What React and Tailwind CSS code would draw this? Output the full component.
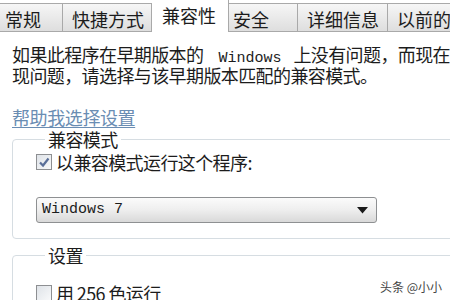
import React from 'react'

const cjk = { fontFamily: '"Noto Sans CJK SC", "Noto Sans", sans-serif' }
const mono = { fontFamily: '"Liberation Mono", monospace' }

const tabs = [
  { label: '常规', w: 'w-[63px]', pl: 'pl-[5px]' },
  { label: '快捷方式', w: 'w-[89px]', pl: 'pl-[9px]' },
  { label: '兼容性', w: 'w-[77px]', pl: 'pl-[10px]', active: true },
  { label: '安全', w: 'w-[69px]', pl: 'pl-[4px]' },
  { label: '详细信息', w: 'w-[90px]', pl: 'pl-[9px]' },
  { label: '以前的版本', w: 'w-[90px]', pl: 'pl-[9px]' },
]

function Check({ checked }) {
  return (
    <span className="w-[16px] h-[16px] border border-[#8d8f92] bg-gradient-to-br from-[#dfe3e8] to-[#f8f9fa] flex items-center justify-center shrink-0">
      {checked && (
        <svg width="12" height="12" viewBox="0 0 12 12">
          <path d="M2 6.5 L5 9.5 L10.5 2.5" fill="none" stroke="#5a6f99" strokeWidth="2.2" />
        </svg>
      )}
    </span>
  )
}

export default function App() {
  return (
    <div className="w-[450px] h-[300px] overflow-hidden bg-white relative text-[#1c1c1c]" style={cjk}>
      {/* tab strip */}
      <div className="flex items-end h-[32px] border-b border-[#a9a9a9]">
        {tabs.map(t => (
          <div
            key={t.label}
            className={`${t.w} ${t.pl} shrink-0 whitespace-nowrap overflow-hidden text-[18px] border border-l-0 border-[#a9a9a9] ${t.active ? 'h-[33px] -mb-px bg-white border-b-0 border-l leading-[30px]' : 'h-[28px] border-b-0 bg-gradient-to-b from-[#f6f6f6] to-[#dedede] leading-[30px]'}`}
          >
            {t.label}
          </div>
        ))}
      </div>

      <div className="pl-[12px] pt-[14px] text-[18px] tracking-[-0.6px] leading-[17px] whitespace-nowrap">
        <div className="flex items-baseline">
          <span>如果此程序在早期版本的</span>
          <span className="text-[15px] tracking-normal ml-[15px] mr-[12px]" style={mono}>Windows</span>
          <span>上没有问题，而现在出</span>
        </div>
        <div>现问题，请选择与该早期版本匹配的兼容模式。</div>
      </div>

      <div className="pl-[12px] mt-[23px] text-[18px] tracking-[-0.4px] leading-[20px]">
        <span className="text-[#6a8db3] underline underline-offset-2">帮助我选择设置</span>
      </div>

      <fieldset className="ml-[12px] w-[460px] border border-[#d6dde2] rounded-[4px] pl-[23px] pb-[15px] mt-[2px] text-[18px] tracking-[-0.6px]">
        <legend className="ml-[9px] px-[3px] leading-[20px]">兼容模式</legend>
        <div className="flex items-center gap-[4px] mt-[3px] leading-[20px]">
          <Check checked />
          <span>以兼容模式运行这个程序:</span>
        </div>
        <div className="mt-[25px] w-[341px] h-[26px] border border-[#8e9092] rounded-[3px] bg-gradient-to-b from-[#fbfbfb] via-[#eeeeee] to-[#d9d9d9] flex items-center justify-between pl-[5px] pr-[8px]">
          <span className="text-[15px] tracking-normal" style={mono}>Windows 7</span>
          <svg width="11" height="7" viewBox="0 0 11 7">
            <path d="M0 0 H11 L5.5 6.5 Z" fill="#1a1a1a" />
          </svg>
        </div>
      </fieldset>

      <fieldset className="ml-[12px] mt-[6px] w-[460px] border border-[#d6dde2] rounded-[4px] pl-[23px] pb-[14px] text-[18px] tracking-[-0.6px]">
        <legend className="ml-[9px] px-[3px] leading-[20px]">设置</legend>
        <div className="flex items-center gap-[4px] mt-[18px] leading-[20px]">
          <Check />
          <span>用 256 色运行</span>
        </div>
      </fieldset>

      <div className="absolute left-[380px] top-[280px] text-[12px] leading-[14px] text-[#444]">头条 @小小</div>
    </div>
  )
}
